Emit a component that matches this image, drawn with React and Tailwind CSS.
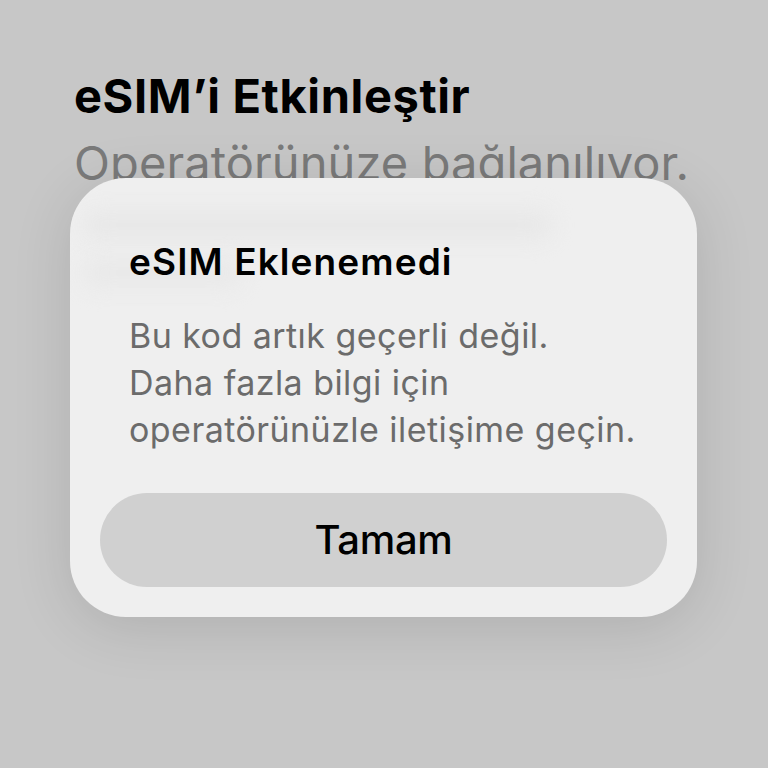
export default function App() {
  return (
    <div
      className="relative h-[768px] w-[768px] overflow-hidden bg-[#c7c7c7]"
      style={{ fontFamily: 'Inter, "Noto Sans", sans-serif' }}
    >
      {/* page behind the alert */}
      <div className="px-[74px] pt-[68px]">
        <h1 className="text-[47px] font-bold leading-[56px] tracking-[0.6px] text-black">eSIM’i Etkinleştir</h1>
        <p className="mt-[11px] text-[47px] leading-[56px] tracking-[0.1px] text-[#7a7a7a]">Operatörünüze bağlanılıyor.</p>
      </div>

      {/* alert */}
      <div className="absolute left-[70px] top-[178px] w-[627px] overflow-hidden rounded-[56px] bg-[#efefef] shadow-[0_10px_60px_rgba(0,0,0,0.12)]">
        {/* blurred content showing through the material */}
        <div className="pointer-events-none absolute left-[12px] top-[32px] flex flex-col gap-[18px]">
          <div className="h-[30px] w-[470px] rounded-full bg-[#e8e8e8] blur-[10px]" />
          <div className="h-[30px] w-[160px] rounded-full bg-[#e9e9e9] blur-[10px]" />
        </div>
        <div className="relative px-[59px] pt-[62px]">
          <h2 className="text-[37px] font-semibold leading-[44px] tracking-[1.1px] text-black">eSIM Eklenemedi</h2>
          <p className="mt-[28px] text-[34px] leading-[47px] tracking-[0.45px] text-[#6b6b6b]">
            Bu kod artık geçerli değil.
            <br />
            Daha fazla bilgi için
            <br />
            operatörünüzle iletişime geçin.
          </p>
        </div>
        <div className="relative px-[30px] pb-[30px] pt-[40px]">
          <button className="flex h-[94px] w-full items-center justify-center rounded-full bg-[#d0d0d0] text-[40px] font-medium tracking-[-0.3px] text-black">
            Tamam
          </button>
        </div>
      </div>
    </div>
  );
}
